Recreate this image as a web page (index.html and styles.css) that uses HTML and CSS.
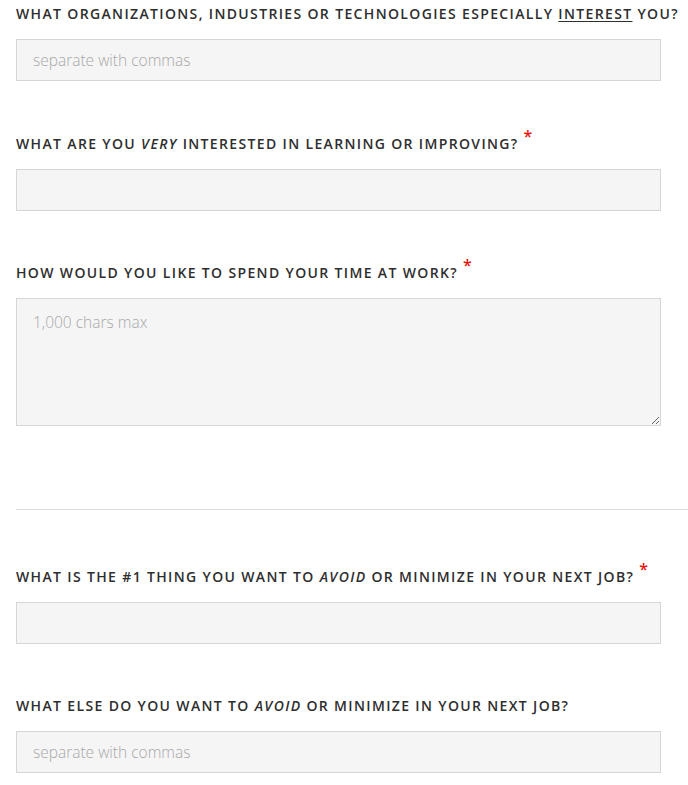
FILE: index.html
```html
<!DOCTYPE html>
<html lang="en">
<head>
  <meta charset="UTF-8">
  <meta name="viewport" content="width=device-width, initial-scale=1.0">
  <title>Interests</title>
  <link rel="stylesheet" href="styles.css">
</head>
<body>
  <form class="form">
    <div class="field">
      <label for="orgs">What organizations, industries or technologies especially <u>interest</u> you?</label>
      <input id="orgs" type="text" placeholder="separate with commas">
    </div>

    <div class="field">
      <label for="learn">What are you <em>very</em> interested in learning or improving?<span class="req">*</span></label>
      <input id="learn" type="text">
    </div>

    <div class="field">
      <label for="time">How would you like to spend your time at work?<span class="req">*</span></label>
      <textarea id="time" placeholder="1,000 chars max"></textarea>
    </div>

    <hr>

    <div class="field">
      <label for="avoid">What is the #1 thing you want to <em>avoid</em> or minimize in your next job?<span class="req">*</span></label>
      <input id="avoid" type="text">
    </div>

    <div class="field">
      <label for="avoid-more">What else do you want to <em>avoid</em> or minimize in your next job?</label>
      <input id="avoid-more" type="text" placeholder="separate with commas">
    </div>
  </form>
</body>
</html>
```

FILE: styles.css
```css
body {
  margin: 0;
  font-family: "Open Sans", "Liberation Sans", sans-serif;
  color: #333;
  background: #fff;
}
.form {
  padding: 4px 0 0 16px;
}
.field {
  margin-bottom: 52px;
}
.field:first-child {
  margin-bottom: 53px;
}
.field:last-child {
  margin-bottom: 0;
}
.field label {
  display: block;
  font-size: 14px;
  font-weight: 600;
  line-height: 20px;
  letter-spacing: 1.35px;
  text-transform: uppercase;
  white-space: nowrap;
  margin-bottom: 15px;
  color: #2e2e2e;
}
.field label u {
  text-underline-offset: 2px;
}
.req {
  color: #e8160c;
  font-size: 16px;
  vertical-align: 7px;
  margin-left: 5px;
  line-height: 0;
}
.field input,
.field textarea {
  display: block;
  box-sizing: border-box;
  width: 645px;
  height: 42px;
  margin: 0;
  padding: 0 16px;
  border: 1px solid #d6d6d6;
  border-radius: 0;
  background: #f5f5f5;
  font-family: "Open Sans", "Liberation Sans", sans-serif;
  font-size: 15.5px;
  font-weight: 300;
  color: #333;
  outline: none;
}
.field textarea {
  height: 128px;
  padding: 12px 16px;
  line-height: 22px;
}
.field input::placeholder,
.field textarea::placeholder {
  color: #a8a8a8;
  opacity: 1;
}
hr {
  border: 0;
  border-top: 1px solid #dedede;
  margin: 83px 0 57px;
}
```
